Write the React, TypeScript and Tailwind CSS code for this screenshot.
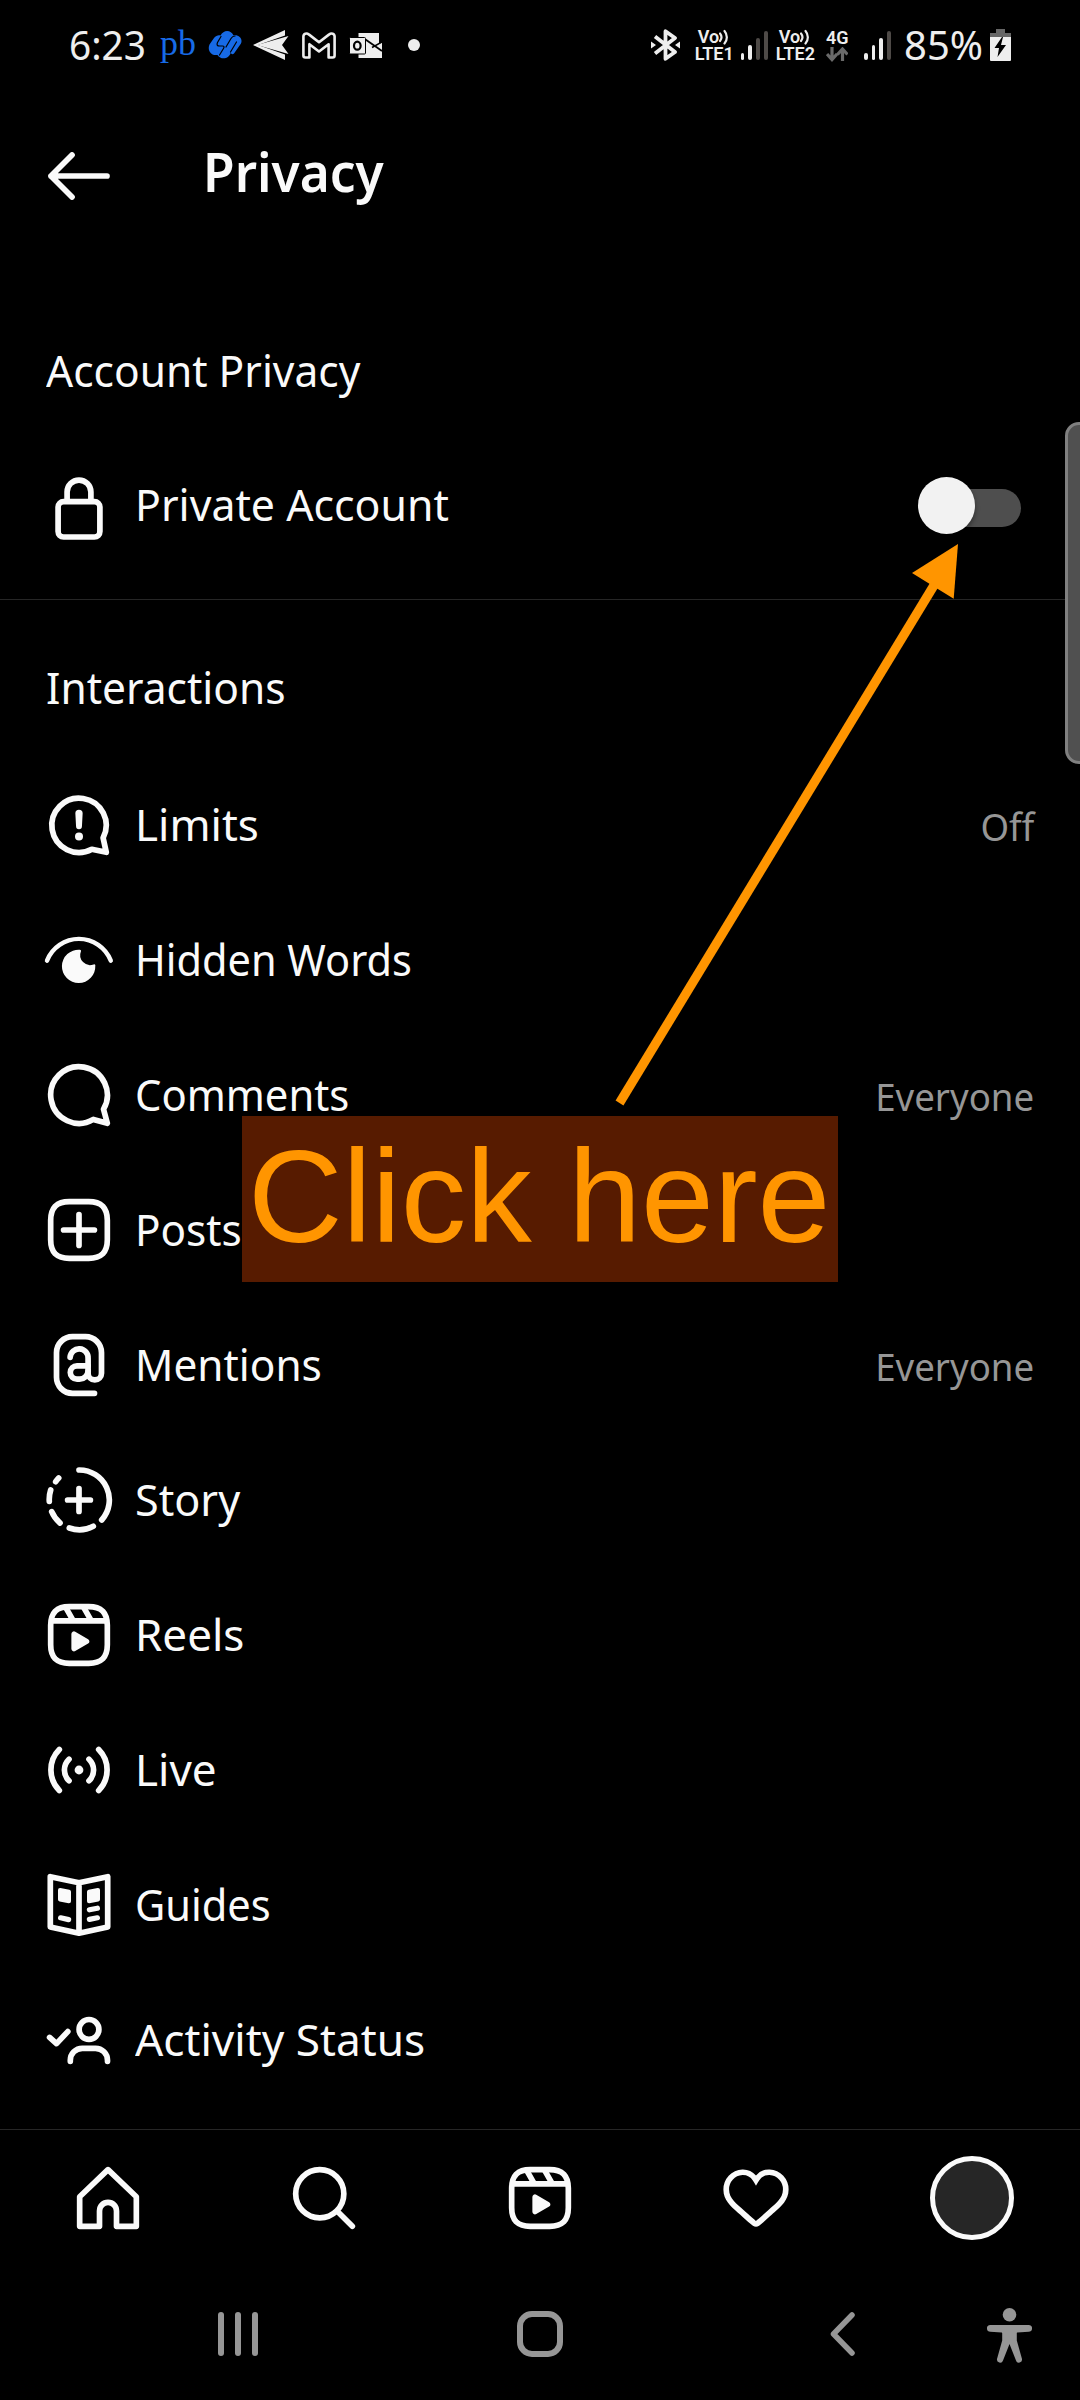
import type { ReactNode } from 'react';

type IconProps = { children: ReactNode };

type ROW = {
  icon: ReactNode;
  label: string;
  fit: string;
  value?: string;
};

// 24 unit grid icons, shared by the list and the tab bar
const Icon24 = ({ children }: IconProps) => (
  <svg
    className="h-[68px] w-[68px] shrink-0"
    viewBox="0 0 24 24"
    fill="none"
    stroke="currentColor"
    strokeWidth="2"
    strokeLinecap="round"
    strokeLinejoin="round"
  >
    {children}
  </svg>
);

const Icon72 = ({ children }: IconProps) => (
  <svg
    className="h-[72px] w-[72px] shrink-0"
    viewBox="0 0 72 72"
    fill="none"
    stroke="currentColor"
    strokeWidth="5.7"
    strokeLinecap="round"
    strokeLinejoin="round"
  >
    {children}
  </svg>
);

const squarePath =
  'M2 12v3.45c0 2.85.7 4 1.6 4.94.95.91 2.1 1.61 4.95 1.61h6.9c2.85 0 4-.7 4.94-1.6.91-.95 1.61-2.1 1.61-4.95v-6.9c0-2.85-.7-4-1.6-4.94C19.45 2.7 18.3 2 15.45 2h-6.9c-2.85 0-4 .7-4.94 1.6C2.7 4.56 2 5.71 2 8.56Z';

const ReelsIcon = () => (
  <Icon24>
    <path d={squarePath} />
    <path d="M2.05 7h19.9M13.5 2l2.86 5M7.2 2.1 10 7" strokeLinecap="butt" />
    <path
      d="M9.763 17.664a.908.908 0 0 1-.454-.787V11.63a.909.909 0 0 1 1.364-.788l4.545 2.624a.909.909 0 0 1 0 1.575l-4.545 2.624a.91.91 0 0 1-.91 0Z"
      fill="currentColor"
      stroke="none"
    />
  </Icon24>
);

const LockIcon = () => (
  <Icon72>
    <rect x="15.1" y="31.6" width="41.8" height="35.4" rx="5.5" />
    <path d="M24.1 31V22a11.9 11.9 0 0 1 23.8 0v9" />
  </Icon72>
);

const rows: ROW[] = [
  {
    icon: (
      <Icon72>
        <path d="M60.1 48.9a27.2 27.2 0 1 0-11.3 11.4L63.3 63.3Z" />
        <path d="M33.6 24.3a2.4 2.4 0 0 1 4.8 0l-.7 13a1.7 1.7 0 0 1-3.4 0Z" fill="currentColor" strokeWidth="2.5" />
        <circle cx="36" cy="47.4" r="4" fill="currentColor" stroke="none" />
      </Icon72>
    ),
    label: 'Limits',
    fit: 'scale-x-100',
    value: 'Off',
  },
  {
    icon: (
      <Icon72>
        <path d="M4 36.6a34.3 34.3 0 0 1 63.8 0" strokeWidth="4.4" />
        <path
          d="M36.6 25.7a1.2 1.2 0 0 1 1.3 1.8A9.9 9.9 0 0 0 50.6 40.4a1.1 1.1 0 0 1 1.7 1.2A16.7 16.7 0 1 1 36.6 25.7Z"
          fill="currentColor"
          stroke="none"
        />
      </Icon72>
    ),
    label: 'Hidden Words',
    fit: 'scale-x-[0.943]',
  },
  {
    icon: (
      <Icon24>
        <path d="M20.656 17.008a9.993 9.993 0 1 0-3.59 3.615L22 22Z" />
      </Icon24>
    ),
    label: 'Comments',
    fit: 'scale-x-[0.95]',
    value: 'Everyone',
  },
  {
    icon: (
      <Icon24>
        <path d={squarePath} />
        <path d="M6.55 12h10.9M12 6.55v10.9" />
      </Icon24>
    ),
    label: 'Posts',
    fit: 'scale-x-[0.96]',
  },
  {
    icon: (
      <Icon72>
        <path d="M51.5 64.3H29.5a16 16 0 0 1-16-16V23.7a16 16 0 0 1 16-16h13a16 16 0 0 1 16 16v20.5a6.7 6.7 0 0 1-13.4 0V29.5a9 9 0 0 0-18-1.2" />
        <path d="M45 36.8H34a6.7 6.7 0 0 0 0 13.4h2.5a8.6 8.6 0 0 0 8.6-8" />
      </Icon72>
    ),
    label: 'Mentions',
    fit: 'scale-x-[0.963]',
    value: 'Everyone',
  },
  {
    icon: (
      <Icon72>
        <path d="M36 6a30 30 0 0 1 22.7 50M50.3 62.3a30 30 0 0 1-24 1.7M17 59a30 30 0 0 1-8.3-11.3M6.3 37.3a30 30 0 0 1 1.4-11.3M12.7 17.7a30 30 0 0 1 3-3.7" />
        <path d="M24.6 36h22.8M36 24.6v22.8" />
      </Icon72>
    ),
    label: 'Story',
    fit: 'scale-x-[0.98]',
  },
  { icon: <ReelsIcon />, label: 'Reels', fit: 'scale-x-100' },
  {
    icon: (
      <Icon72>
        <path d="M16.3 15.6a29 29 0 0 0 0 40.8M55.7 15.6a29 29 0 0 1 0 40.8M26 25.2a15 15 0 0 0 0 21.6M46 25.2a15 15 0 0 1 0 21.6" />
        <circle cx="36" cy="36" r="4.4" fill="currentColor" stroke="none" />
      </Icon72>
    ),
    label: 'Live',
    fit: 'scale-x-100',
  },
  {
    icon: (
      <Icon72>
        <path d="M7.3 7.7 36 13.8l28.7-6.1V58L36 64.2 7.3 58ZM36 13.8v50.4" />
        <path d="M17 21l9 1.8v9.5l-9-1.8ZM55 21l-9 1.8v9.5l9-1.8Z" fill="currentColor" strokeWidth="4" />
        <path d="M17.6 48.8l8 1.8M54.4 39.2l-8 1.6M54.4 48.8l-8 1.6" strokeWidth="5.2" />
      </Icon72>
    ),
    label: 'Guides',
    fit: 'scale-x-[0.945]',
  },
  {
    icon: (
      <Icon72>
        <circle cx="46" cy="25.4" r="9.9" />
        <path d="M27.3 57.3v-1a12 12 0 0 1 12-12h13.2a12 12 0 0 1 12 12v1M6.6 33.4l6.9 6.2 11.3-12" />
      </Icon72>
    ),
    label: 'Activity Status',
    fit: 'scale-x-[1.005]',
  },
];

const SectionTitle = ({ children }: IconProps) => (
  <div className="flex h-[135px] items-center pb-[2px] pl-[46px] text-[44px] leading-none">
    <h2 className="origin-left scale-x-[0.966]">{children}</h2>
  </div>
);

const Row = ({ icon, label, fit, children }: { icon: ReactNode; label: string; fit: string; children?: ReactNode }) => (
  <div className="flex h-[135px] items-center pr-[46px] pl-[43px]">
    <div className="flex w-[72px] shrink-0 justify-center">{icon}</div>
    <div className="ml-[20px] flex-1 pb-[3px] text-[44px] leading-none whitespace-nowrap">
      <span className={`inline-block origin-left ${fit}`}>{label}</span>
    </div>
    {children}
  </div>
);

const Signal = ({ level }: { level: number }) => (
  <div className="flex h-[29px] items-end gap-1">
    <span className="h-[7px] w-[3.8px] rounded-sm bg-[#eee]" />
    <span className="h-[15px] w-[3.8px] rounded-sm bg-[#eee]" />
    <span className={`h-[22px] w-[3.8px] rounded-sm ${level > 2 ? 'bg-[#eee]' : 'bg-[#4e4a47]'}`} />
    <span className="h-[29px] w-[3.8px] rounded-sm bg-[#4e4a47]" />
  </div>
);

const VoLte = ({ sim }: { sim: number }) => (
  <div className="flex w-[40px] flex-col font-['Roboto'] text-[18px] leading-[17px] font-semibold">
    <span className="flex h-[17px] items-center pl-[3px]">
      <span>Vo</span>
      <svg className="h-4 w-[12px]" viewBox="0 0 12 16" fill="none" stroke="currentColor" strokeWidth="2.2" strokeLinecap="round">
        <path d="M1 4.5a6 6 0 0 1 0 7.5M5.5 2a9.5 9.5 0 0 1 0 12.5" />
      </svg>
    </span>
    <span className="h-[17px]">LTE{sim}</span>
  </div>
);

const StatusBar = () => (
  <div className="flex h-[90px] items-center pl-[69px] text-[#eee]">
    <span className="w-[91px] origin-left scale-x-[0.97] text-[40px] leading-none">6:23</span>
    <span className="w-[48px] pb-1 font-['Liberation_Serif'] text-[36px] leading-none text-[#176ae6]">pb</span>
    <svg className="h-[30px] w-[34px]" viewBox="0 0 34 30" fill="none">
      <path
        d="M12.5 5.5C15.5-.5 23-.5 25.5 5.5 31 4.5 35 9 33 13.5L26 23.5C24.5 25 22.5 24 23 22C21.5 29 13 30.500 9.500 25 3 26-1 20 1.500 14.500L6 8C8 5.500 10.500 4.800 12.500 5.500Z"
        fill="#176ae6"
      />
      <path
        d="M13 6.5 9.500 12.500q-1.500 3.500 2 3.500h3q2.500 0 1 2.500l-4 6.500M27 6q-2.500 0-4 2.500l-5 8.500M28.500 12l-6 10"
        stroke="#000"
        strokeWidth="1.2"
        strokeLinecap="round"
      />
    </svg>
    <svg className="ml-[11px] h-[30px] w-[36px]" viewBox="0 0 36 30" fill="currentColor">
      <path d="M0 15 32 0v5.500L5 15Zm0 0 32 15v-5.500L5 15Z" />
      <path d="M4 15 35.500 6 29 15l6.500 9Z" />
    </svg>
    <svg
      className="ml-[13px] h-[27px] w-[34px]"
      viewBox="0 0 34 27"
      fill="none"
      stroke="currentColor"
      strokeWidth="2.6"
      strokeLinejoin="round"
    >
      <path d="M1.400 4.500C1.400 1.500 4.800.7 6.800 2.400L17 10.200 27.200 2.400C29.200.7 32.600 1.500 32.600 4.500V23.500Q32.600 25.500 30.600 25.500H26.600V12.200L17 19.500 7.400 12.200V25.500H3.400Q1.400 25.500 1.400 23.500Z" />
    </svg>
    <svg className="ml-[13px] h-[27px] w-[34px]" viewBox="0 0 34 27">
      <path d="M9.500 1h20.500v11l3 -1.500V26H9.500Z" fill="#eee" />
      <path d="M16.500 7.500 33 19" stroke="#000" strokeWidth="1.8" />
      <path d="M23 15.500 34 9.500" stroke="#000" strokeWidth="1.500" />
      <rect x=".5" y="5.500" width="16" height="16.500" rx="1" fill="#eee" stroke="#000" />
      <ellipse cx="8.300" cy="13.700" rx="3.300" ry="4" fill="none" stroke="#000" strokeWidth="2.2" />
    </svg>
    <span className="ml-[25px] h-3 w-3 rounded-full bg-[#eee]" />

    <div className="ml-auto flex items-center pr-[69px]">
      <svg
        className="h-[32px] w-[29px]"
        viewBox="0 0 29 32"
        fill="none"
        stroke="currentColor"
        strokeWidth="3.8"
        strokeLinejoin="round"
      >
        <path d="M4 7.500 24 23 14.500 29.800V2.200L24 9 4 24.500" />
        <path d="M0 12.500 5 16 0 19.500ZM29 12.500 24 16 29 19.500Z" fill="currentColor" stroke="none" />
      </svg>
      <div className="ml-[15px]">
        <VoLte sim={1} />
      </div>
      <div className="ml-[6px]">
        <Signal level={2} />
      </div>
      <div className="ml-[8px]">
        <VoLte sim={2} />
      </div>
      <div className="ml-[10px] flex w-[23px] flex-col items-center font-['Roboto'] text-[18px] leading-[17px] font-semibold">
        4G
        <svg className="mt-px h-[15px] w-[22px]" viewBox="0 0 22 15" fill="none" stroke="#6a6a6a" strokeWidth="3.2">
          <path d="M6 0v12M1 7l5 5.500L11 7M16.500 14V3M11.500 7.500l5-5.500 5 5.500" />
        </svg>
      </div>
      <div className="ml-[15px]">
        <Signal level={3} />
      </div>
      <span className="ml-[13px] w-[86px] origin-left text-[40px] leading-none">85%</span>
      <svg className="h-[32px] w-[21px]" viewBox="0 0 21 32">
        <path d="M6 0h9v4h6v5H0V4h6Z" fill="#666" />
        <path d="M0 8h21v23a1 1 0 0 1-1 1H1a1 1 0 0 1-1-1Z" fill="#eee" />
        <path d="M12 8 4.500 19H9l-1.500 9L16 16h-5l2-8Z" fill="#000" />
      </svg>
    </div>
  </div>
);

const TabBar = () => (
  <div className="grid h-[136px] grid-cols-5 place-items-center border-t border-[#262626]">
    <Icon24>
      <path d="M9.005 16.545a2.997 2.997 0 0 1 5.995 0V22h7V11.543L12 2 2 11.543V22h7.005Z" />
    </Icon24>
    <Icon24>
      <path d="M19 10.5A8.5 8.5 0 1 1 10.5 2a8.5 8.5 0 0 1 8.5 8.5ZM16.511 16.511 22 22" />
    </Icon24>
    <ReelsIcon />
    <Icon24>
      <path
        d="M16.792 3.904A4.989 4.989 0 0 1 21.5 9.122c0 3.072-2.652 4.959-5.197 7.222-2.512 2.243-3.865 3.469-4.303 3.752-.477-.309-2.143-1.823-4.303-3.752C5.141 14.072 2.5 12.167 2.5 9.122a4.989 4.989 0 0 1 4.708-5.218 4.21 4.21 0 0 1 3.675 1.941c.84 1.175.98 1.763 1.12 1.763s.278-.588 1.11-1.766a4.17 4.17 0 0 1 3.679-1.938m0-2a6.04 6.04 0 0 0-4.797 2.127 6.052 6.052 0 0 0-4.787-2.127A6.985 6.985 0 0 0 .5 9.122c0 3.61 2.55 5.827 5.015 7.97.283.246.569.494.853.747l1.027.918a44.998 44.998 0 0 0 3.518 3.018 2 2 0 0 0 2.174 0 45.263 45.263 0 0 0 3.626-3.115l.922-.824c.293-.26.59-.519.885-.774 2.334-2.025 4.98-4.32 4.98-7.94a6.985 6.985 0 0 0-6.708-7.218Z"
        fill="currentColor"
        stroke="none"
      />
    </Icon24>
    <div className="h-[84px] w-[84px] rounded-full border-[5px] border-[#fafafa] bg-[#262626]" />
  </div>
);

const SystemBar = () => (
  <div className="flex h-[135px] items-center pt-[2px] pl-[218px] text-[#969696]">
    <div className="flex h-[44px] w-[40px] justify-between">
      <span className="w-[6px] rounded-full bg-[#969696]" />
      <span className="w-[6px] rounded-full bg-[#969696]" />
      <span className="w-[6px] rounded-full bg-[#969696]" />
    </div>
    <div className="ml-[259px] h-[46px] w-[46px] rounded-[15px] border-[6px] border-[#969696]" />
    <svg
      className="ml-[267px] h-[44px] w-[25px]"
      viewBox="0 0 25 44"
      fill="none"
      stroke="currentColor"
      strokeWidth="5.5"
      strokeLinecap="round"
      strokeLinejoin="round"
    >
      <path d="M22 3 3.500 22 22 41" />
    </svg>
    <svg className="mt-1 ml-[132px] h-[55px] w-[45px]" viewBox="0 0 45 55" fill="currentColor">
      <circle cx="22.500" cy="6.800" r="6.800" />
      <path d="M3.300 17h38.400a3.300 3.300 0 0 1 0 6.700l-11.500.8q-.5 0-.4 1v7L35 51a3.100 3.100 0 0 1-6 1.500L22.500 36 16 52.500A3.100 3.100 0 0 1 10 51l5.200-18.500v-7q0-1-.5-1L3.300 23.700a3.300 3.300 0 0 1 0-6.700Z" />
    </svg>
  </div>
);

const App = () => {
  return (
    <div className="relative h-[2400px] w-[1080px] overflow-hidden bg-black font-['Noto_Sans',sans-serif] text-[#fafafa]">
      <StatusBar />

      <header className="flex h-[170px] items-center pt-[2px] pl-[48px]">
        <svg
          className="h-[48px] w-[62px]"
          viewBox="0 0 62 48"
          fill="none"
          stroke="currentColor"
          strokeWidth="5.7"
          strokeLinecap="round"
          strokeLinejoin="round"
        >
          <path d="M24 3 3 24l21 21M3 24h56" />
        </svg>
        <h1 className="ml-[93px] origin-left scale-x-[0.935] pb-[12px] text-[55px] leading-none font-semibold">
          Privacy
        </h1>
      </header>

      <main>
        <section className="mt-[43px] h-[297px] border-b border-[#262626]">
          <SectionTitle>Account Privacy</SectionTitle>
          <Row icon={<LockIcon />} label="Private Account" fit="scale-x-[0.973]">
            <div className="relative mr-[13px] h-[57px] w-[103px]">
              <div className="absolute top-[12px] right-0 h-[38px] w-[90px] rounded-full bg-[#4e4e4e]" />
              <div className="absolute top-0 left-0 h-[57px] w-[57px] rounded-full bg-[#f2f2f2] shadow-[0_3px_5px_rgba(0,0,0,0.4)]" />
            </div>
          </Row>
        </section>

        <section className="h-[1529px] pt-[20px]">
          <SectionTitle>Interactions</SectionTitle>
          <div className="pt-[2.5px]">
            {rows.map((row, key) => (
              <Row icon={row.icon} label={row.label} fit={row.fit} key={key}>
                {row.value && (
                  <span className="origin-right scale-x-[0.94] text-[39px] leading-none text-[#969696]">
                    {row.value}
                  </span>
                )}
              </Row>
            ))}
          </div>
        </section>
      </main>

      <TabBar />
      <SystemBar />

      {/* edge panel handle */}
      <div className="absolute top-[422px] -right-1 h-[342px] w-[19px] rounded-l-[14px] border-[3px] border-[#808080] bg-[#505050]" />

      {/* callout */}
      <svg className="absolute top-[540px] left-[610px] h-[570px] w-[352px]" viewBox="610 540 352 570">
        <path d="M619.5 1103 936 582" stroke="#ff9500" strokeWidth="9.2" />
        <path d="M958 544 953.7 598.7 912 573Z" fill="#ff9500" />
      </svg>
      <div className="absolute top-[1116px] left-[242px] flex h-[166px] w-[596px] items-center bg-[#571b00] pb-[6px] pl-[6px] font-['Liberation_Sans'] text-[131px] leading-none whitespace-nowrap text-[#ff9500]">
        Click here
      </div>
    </div>
  );
};

export default App;
